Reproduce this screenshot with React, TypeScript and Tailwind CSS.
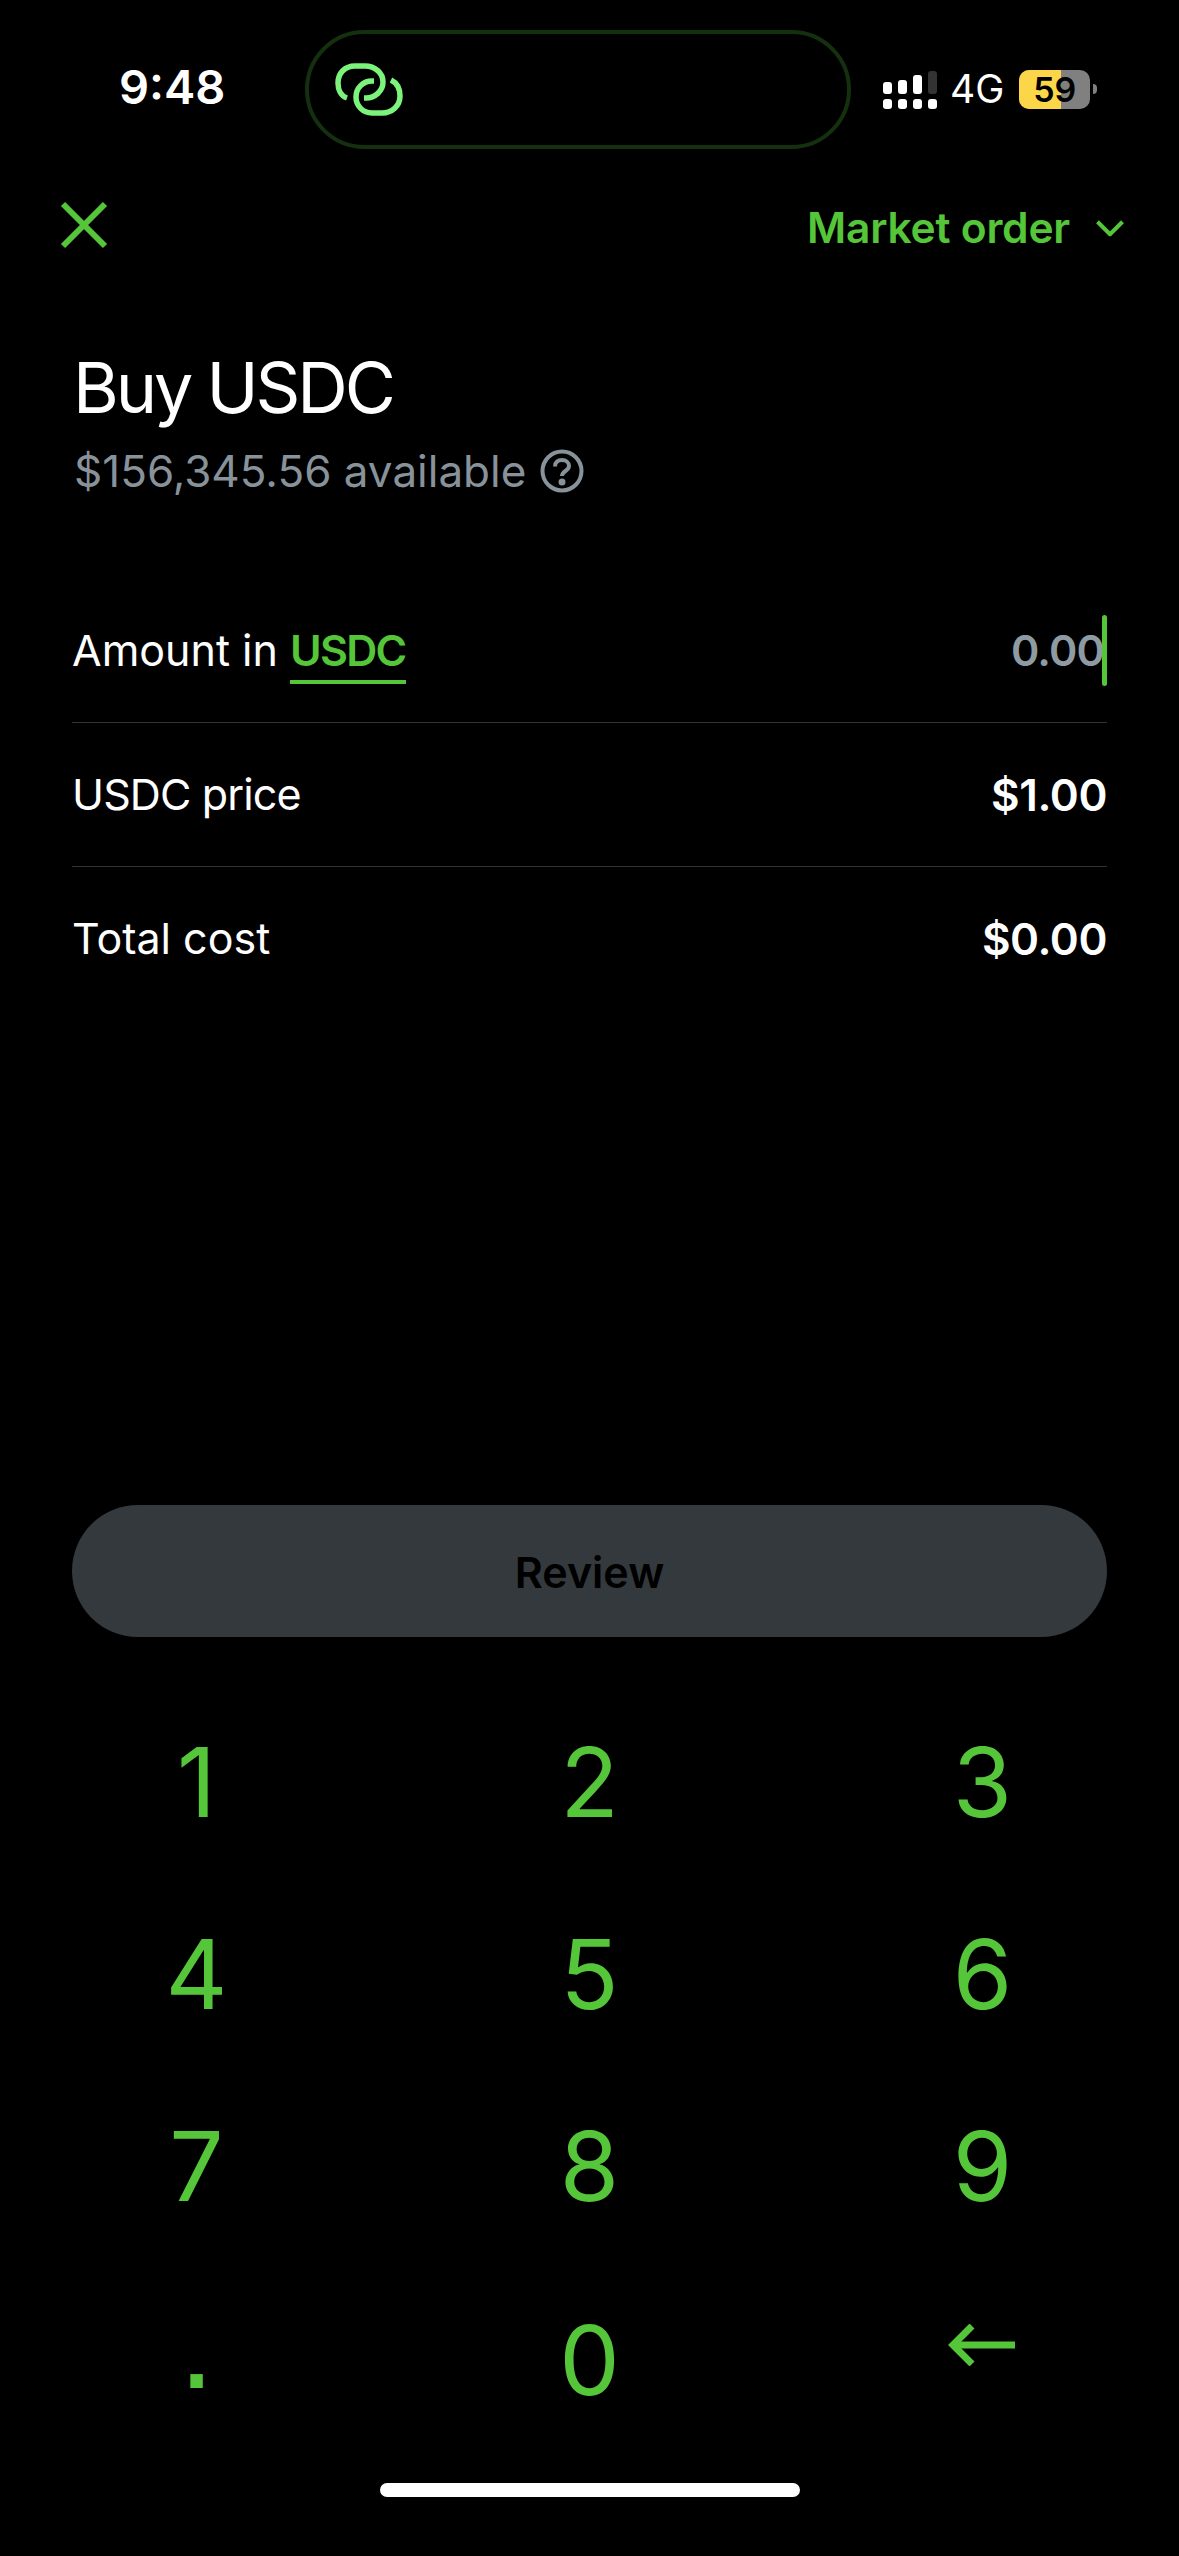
import { ChevronDown, X } from "lucide-react";

const keys = ["1", "2", "3", "4", "5", "6", "7", "8", "9"];

function LinkMark() {
  return (
    <svg width="68" height="53" viewBox="0 0 68 53" fill="none" stroke="#7cf47c" strokeWidth="5.5">
      <path d="M12 35 C6 33 3 27 3 20 C3 10 10 3 20 3 H30 C40 3 48 10 48 19 C48 28 40 35 31 35 H29" />
      <path d="M56 17 C62 20 65 26 65 33 C65 43 57 50 47 50 H37 C28 50 21 43 21 34 C21 25 28 18 37 18 H39" />
    </svg>
  );
}

function SignalBar({ top, off }: { top: string; off?: boolean }) {
  return (
    <div className="flex h-[39px] w-[9px] flex-col justify-end gap-[5px]">
      <div className={`${top} rounded-[3px] ${off ? "bg-[#333]" : "bg-white"}`} />
      <div className="h-[10px] rounded-[3px] bg-white" />
    </div>
  );
}

function StatusBar() {
  return (
    <div className="flex h-[178px] items-center pl-[119px]">
      <span className="w-[186px] pb-[3px] text-[47px] font-semibold text-white">9:48</span>
      <div className="flex h-[119px] w-[546px] items-center rounded-[60px] border-[4px] border-[#14300f] pl-[26px]">
        <LinkMark />
      </div>
      <div className="ml-[32px] flex items-center">
        <div className="flex gap-[6px]">
          <SignalBar top="h-[12px]" />
          <SignalBar top="h-[14px]" />
          <SignalBar top="h-[19px]" />
          <SignalBar top="h-[23px]" off />
        </div>
        <span className="ml-[13px] text-[39px] text-white">4G</span>
        <div className="relative ml-[15px] flex h-[39px] w-[71px] overflow-hidden rounded-[10px] bg-[#808080]">
          <div className="h-full w-[42px] bg-[#fbd648]" />
          <span className="absolute inset-0 flex items-center justify-center text-[34px] font-semibold text-black">59</span>
        </div>
        <div className="ml-[3px] h-[10px] w-[4px] rounded-r-full bg-[#808080]" />
      </div>
    </div>
  );
}

function Row({ label, value, labelClass }: { label: string; value: string; labelClass?: string }) {
  return (
    <div className="flex h-[144px] items-center justify-between border-t border-[#333] text-[43px] text-white">
      <span className={labelClass}>{label}</span>
      <span className="text-[44px] font-semibold tracking-[-0.01em]">{value}</span>
    </div>
  );
}

export default function App() {
  return (
    <div className="flex h-[2556px] w-[1179px] flex-col bg-black font-['Inter',sans-serif]">
      <StatusBar />
      <div className="flex h-[94px] items-center justify-between pl-[42px] pr-[44px]">
        <X size={84} color="#55c639" strokeWidth={1.7} strokeLinecap="butt" />
        <div className="flex items-center gap-[15px] pt-[5px] text-[42.5px] font-semibold tracking-[-0.005em] text-[#55c639]">
          <span>Market order</span>
          <ChevronDown size={50} strokeWidth={1.9} strokeLinecap="butt" />
        </div>
      </div>

      <div className="px-[72px] pt-[74px]">
        <h1 className="pl-[1px] text-[70px] leading-[84px] tracking-[-0.045em] text-white">Buy USDC</h1>
        <div className="mt-[8px] flex items-center gap-[14px] pl-[2px] text-[44px] text-[#87929a]">
          <span>$156,345.56 available</span>
          <svg width="44" height="44" viewBox="0 0 44 44" fill="none" stroke="#87929a" strokeWidth="4">
            <circle cx="22" cy="22" r="19.5" />
            <path d="M15 17.5 C15 13 18 11 22 11 C26 11 29 13.5 29 17 C29 22 22 22 22 27" />
            <circle cx="22" cy="33" r="1.5" fill="#87929a" />
          </svg>
        </div>

        <div className="mt-[74px] flex h-[144px] items-center justify-between text-[43px] text-white">
          <span>
            Amount in{" "}
            <span className="border-b-[4px] border-[#55c639] pb-[4px] font-semibold tracking-[-0.04em] text-[#55c639]">USDC</span>
          </span>
          <div className="flex items-center">
            <span className="font-semibold tracking-[-0.02em] text-[#8f9ba3]">0.00</span>
            <div className="-ml-[2px] h-[71px] w-[5px] rounded-full bg-[#55c639]" />
          </div>
        </div>
        <Row label="USDC price" value="$1.00" labelClass="tracking-[-0.02em]" />
        <Row label="Total cost" value="$0.00" />
      </div>

      <div className="mt-auto px-[72px]">
        <button className="h-[132px] w-full rounded-[66px] bg-[#33393c] pt-[2px] text-[43px] font-semibold text-black">Review</button>
      </div>

      <div className="mt-[52px] grid grid-cols-[393px_393px_393px] text-[#55c639]">
        {keys.map((k) => (
          <div key={k} className="flex h-[192px] items-center justify-center pb-[6px] text-[96px]">{k}</div>
        ))}
        <div className="flex h-[192px] items-center justify-center pb-[36px] font-['Liberation_Sans',sans-serif] text-[130px]">.</div>
        <div className="flex h-[192px] items-center justify-center pb-[2px] text-[96px]">0</div>
        <div className="flex h-[192px] items-center justify-center pr-[4px] pb-[32px]">
          <svg width="68" height="42" viewBox="0 0 68 42" fill="none" stroke="#55c639" strokeWidth="7">
            <path d="M68 21 H6" />
            <path d="M25 2 L6 21 L25 40" />
          </svg>
        </div>
      </div>

      <div className="flex h-[99px] items-start justify-center pt-[26px]">
        <div className="h-[14px] w-[420px] rounded-full bg-white" />
      </div>
    </div>
  );
}
